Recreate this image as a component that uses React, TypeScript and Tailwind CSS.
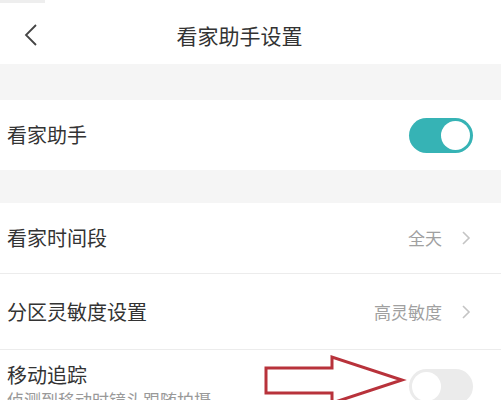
import React from 'react';

const font = { fontFamily: '"Noto Sans CJK SC", "Noto Sans", sans-serif' };

const Toggle = ({ on }: { on: boolean }) => (
  <div
    className={`w-[64px] h-[35px] rounded-full p-[3px] flex ${
      on ? 'bg-[#36b3b5] justify-end' : 'bg-[#ebebeb] justify-start'
    }`}
  >
    <div className="w-[29px] h-[29px] rounded-full bg-white" />
  </div>
);

const Chevron = () => (
  <svg width="10" height="16" viewBox="0 0 10 16" className="ml-[19px]">
    <path d="M2 2 L8 8 L2 14" fill="none" stroke="#c4c4c4" strokeWidth="1.6" />
  </svg>
);

const LinkRow = ({ label, value, height }: { label: string; value: string; height: string }) => (
  <div className={`${height} bg-white flex items-center pl-[7px] pr-[30px]`}>
    <span className="text-[20px] text-[#333]">{label}</span>
    <span className="ml-auto text-[17px] text-[#a0a0a0]">{value}</span>
    <Chevron />
  </div>
);

export default function App() {
  return (
    <div className="w-[501px] h-[400px] overflow-hidden bg-[#f5f5f5] relative" style={font}>
      {/* Header */}
      <div className="h-[64px] bg-white relative flex items-center justify-center pt-[7px] pr-[22px]">
        <div className="absolute left-0 top-0 w-[45px] h-[3px] bg-[#eeeeee]" />
        <svg width="16" height="22" viewBox="0 0 16 22" className="absolute left-[23px] top-[24px]">
          <path d="M13 1 L3 11 L13 21" fill="none" stroke="#444" strokeWidth="1.8" />
        </svg>
        <span className="text-[21px] text-[#333]">看家助手设置</span>
      </div>

      <div className="h-[36px]" />

      <div className="h-[70px] bg-white flex items-center pl-[7px] pr-[28px]">
        <span className="text-[20px] text-[#333]">看家助手</span>
        <div className="ml-auto">
          <Toggle on />
        </div>
      </div>

      <div className="h-[33px]" />

      <LinkRow label="看家时间段" value="全天" height="h-[70px]" />
      <div className="h-px bg-[#ececec]" />
      <LinkRow label="分区灵敏度设置" value="高灵敏度" height="h-[75px]" />
      <div className="h-px bg-[#ececec]" />

      <div className="bg-white flex pl-[7px] pr-[28px] pt-[11px] h-[80px]">
        <div className="flex flex-col">
          <span className="text-[20px] leading-[28px] text-[#333]">移动追踪</span>
          <span className="text-[17px] leading-[22px] text-[#999]">侦测到移动时镜头跟随拍摄</span>
        </div>
        <div className="ml-auto pt-[8px]">
          <Toggle on={false} />
        </div>
      </div>

      {/* annotation arrow */}
      <svg width="150" height="60" viewBox="0 0 150 60" className="absolute left-[258px] top-[350px]">
        <path
          d="M8 18 L74 18 L74 7 L144 30 L74 53 L74 43 L8 43 Z"
          fill="none"
          stroke="#b8323b"
          strokeWidth="3"
          strokeLinejoin="miter"
        />
      </svg>
    </div>
  );
}
